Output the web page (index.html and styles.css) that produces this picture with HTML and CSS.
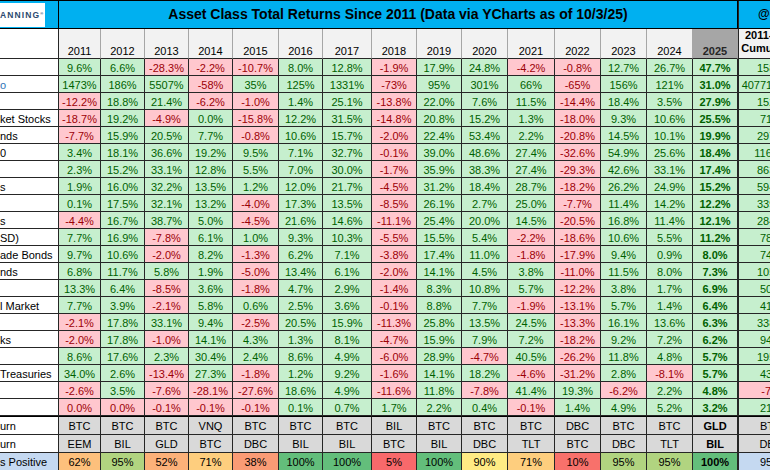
FILE: index.html
```html
<!DOCTYPE html>
<html lang="en">
<head>
<meta charset="utf-8">
<title>Asset Class Total Returns Since 2011</title>
<link rel="stylesheet" href="styles.css">
</head>
<body>
<div class="sheet">
  <div class="row top">
    <div class="logo-cell"><div class="logo">ANNING<span class="reg">®</span></div></div>
    <div class="title">Asset Class Total Returns Since 2011 (Data via YCharts as of 10/3/25)</div>
    <div class="cum handle">@charliebilello</div>
  </div>
  <div class="row head">
    <div class="lab"></div>
    <div>2011</div><div>2012</div><div>2013</div><div>2014</div><div>2015</div><div>2016</div><div>2017</div><div>2018</div><div>2019</div><div>2020</div><div>2021</div><div>2022</div><div>2023</div><div>2024</div><div class="cur">2025</div>
    <div class="cum">2011-2025<br>Cumulative</div>
  </div>
  <div class="row data">
    <div class="lab"></div>
    <div class="p">9.6%</div><div class="p">6.6%</div><div class="n">-28.3%</div><div class="n">-2.2%</div><div class="n">-10.7%</div><div class="p">8.0%</div><div class="p">12.8%</div><div class="n">-1.9%</div><div class="p">17.9%</div><div class="p">24.8%</div><div class="n">-4.2%</div><div class="n">-0.8%</div><div class="p">12.7%</div><div class="p">26.7%</div><div class="p">47.7%</div>
    <div class="p cum">158%</div>
  </div>
  <div class="row data">
    <div class="lab link">o</div>
    <div class="p">1473%</div><div class="p">186%</div><div class="p">5507%</div><div class="n">-58%</div><div class="p">35%</div><div class="p">125%</div><div class="p">1331%</div><div class="n">-73%</div><div class="p">95%</div><div class="p">301%</div><div class="p">66%</div><div class="n">-65%</div><div class="p">156%</div><div class="p">121%</div><div class="p">31.0%</div>
    <div class="p cum">40771552%</div>
  </div>
  <div class="row data">
    <div class="lab"></div>
    <div class="n">-12.2%</div><div class="p">18.8%</div><div class="p">21.4%</div><div class="n">-6.2%</div><div class="n">-1.0%</div><div class="p">1.4%</div><div class="p">25.1%</div><div class="n">-13.8%</div><div class="p">22.0%</div><div class="p">7.6%</div><div class="p">11.5%</div><div class="n">-14.4%</div><div class="p">18.4%</div><div class="p">3.5%</div><div class="p">27.9%</div>
    <div class="p cum">152%</div>
  </div>
  <div class="row data">
    <div class="lab">ket Stocks</div>
    <div class="n">-18.7%</div><div class="p">19.2%</div><div class="n">-4.9%</div><div class="p">0.0%</div><div class="n">-15.8%</div><div class="p">12.2%</div><div class="p">31.5%</div><div class="n">-14.8%</div><div class="p">20.8%</div><div class="p">15.2%</div><div class="p">1.3%</div><div class="n">-18.0%</div><div class="p">9.3%</div><div class="p">10.6%</div><div class="p">25.5%</div>
    <div class="p cum">71%</div>
  </div>
  <div class="row data">
    <div class="lab">nds</div>
    <div class="n">-7.7%</div><div class="p">15.9%</div><div class="p">20.5%</div><div class="p">7.7%</div><div class="n">-0.8%</div><div class="p">10.6%</div><div class="p">15.7%</div><div class="n">-2.0%</div><div class="p">22.4%</div><div class="p">53.4%</div><div class="p">2.2%</div><div class="n">-20.8%</div><div class="p">14.5%</div><div class="p">10.1%</div><div class="p">19.9%</div>
    <div class="p cum">297%</div>
  </div>
  <div class="row data">
    <div class="lab">0</div>
    <div class="p">3.4%</div><div class="p">18.1%</div><div class="p">36.6%</div><div class="p">19.2%</div><div class="p">9.5%</div><div class="p">7.1%</div><div class="p">32.7%</div><div class="n">-0.1%</div><div class="p">39.0%</div><div class="p">48.6%</div><div class="p">27.4%</div><div class="n">-32.6%</div><div class="p">54.9%</div><div class="p">25.6%</div><div class="p">18.4%</div>
    <div class="p cum">1163%</div>
  </div>
  <div class="row data">
    <div class="lab"></div>
    <div class="p">2.3%</div><div class="p">15.2%</div><div class="p">33.1%</div><div class="p">12.8%</div><div class="p">5.5%</div><div class="p">7.0%</div><div class="p">30.0%</div><div class="n">-1.7%</div><div class="p">35.9%</div><div class="p">38.3%</div><div class="p">27.4%</div><div class="n">-29.3%</div><div class="p">42.6%</div><div class="p">33.1%</div><div class="p">17.4%</div>
    <div class="p cum">863%</div>
  </div>
  <div class="row data">
    <div class="lab">s</div>
    <div class="p">1.9%</div><div class="p">16.0%</div><div class="p">32.2%</div><div class="p">13.5%</div><div class="p">1.2%</div><div class="p">12.0%</div><div class="p">21.7%</div><div class="n">-4.5%</div><div class="p">31.2%</div><div class="p">18.4%</div><div class="p">28.7%</div><div class="n">-18.2%</div><div class="p">26.2%</div><div class="p">24.9%</div><div class="p">15.2%</div>
    <div class="p cum">594%</div>
  </div>
  <div class="row data">
    <div class="lab"></div>
    <div class="p">0.1%</div><div class="p">17.5%</div><div class="p">32.1%</div><div class="p">13.2%</div><div class="n">-4.0%</div><div class="p">17.3%</div><div class="p">13.5%</div><div class="n">-8.5%</div><div class="p">26.1%</div><div class="p">2.7%</div><div class="p">25.0%</div><div class="n">-7.7%</div><div class="p">11.4%</div><div class="p">14.2%</div><div class="p">12.2%</div>
    <div class="p cum">339%</div>
  </div>
  <div class="row data">
    <div class="lab">s</div>
    <div class="n">-4.4%</div><div class="p">16.7%</div><div class="p">38.7%</div><div class="p">5.0%</div><div class="n">-4.5%</div><div class="p">21.6%</div><div class="p">14.6%</div><div class="n">-11.1%</div><div class="p">25.4%</div><div class="p">20.0%</div><div class="p">14.5%</div><div class="n">-20.5%</div><div class="p">16.8%</div><div class="p">11.4%</div><div class="p">12.1%</div>
    <div class="p cum">284%</div>
  </div>
  <div class="row data">
    <div class="lab">SD)</div>
    <div class="p">7.7%</div><div class="p">16.9%</div><div class="n">-7.8%</div><div class="p">6.1%</div><div class="p">1.0%</div><div class="p">9.3%</div><div class="p">10.3%</div><div class="n">-5.5%</div><div class="p">15.5%</div><div class="p">5.4%</div><div class="n">-2.2%</div><div class="n">-18.6%</div><div class="p">10.6%</div><div class="p">5.5%</div><div class="p">11.2%</div>
    <div class="p cum">78%</div>
  </div>
  <div class="row data">
    <div class="lab">ade Bonds</div>
    <div class="p">9.7%</div><div class="p">10.6%</div><div class="n">-2.0%</div><div class="p">8.2%</div><div class="n">-1.3%</div><div class="p">6.2%</div><div class="p">7.1%</div><div class="n">-3.8%</div><div class="p">17.4%</div><div class="p">11.0%</div><div class="n">-1.8%</div><div class="n">-17.9%</div><div class="p">9.4%</div><div class="p">0.9%</div><div class="p">8.0%</div>
    <div class="p cum">74%</div>
  </div>
  <div class="row data">
    <div class="lab">nds</div>
    <div class="p">6.8%</div><div class="p">11.7%</div><div class="p">5.8%</div><div class="p">1.9%</div><div class="n">-5.0%</div><div class="p">13.4%</div><div class="p">6.1%</div><div class="n">-2.0%</div><div class="p">14.1%</div><div class="p">4.5%</div><div class="p">3.8%</div><div class="n">-11.0%</div><div class="p">11.5%</div><div class="p">8.0%</div><div class="p">7.3%</div>
    <div class="p cum">105%</div>
  </div>
  <div class="row data">
    <div class="lab"></div>
    <div class="p">13.3%</div><div class="p">6.4%</div><div class="n">-8.5%</div><div class="p">3.6%</div><div class="n">-1.8%</div><div class="p">4.7%</div><div class="p">2.9%</div><div class="n">-1.4%</div><div class="p">8.3%</div><div class="p">10.8%</div><div class="p">5.7%</div><div class="n">-12.2%</div><div class="p">3.8%</div><div class="p">1.7%</div><div class="p">6.9%</div>
    <div class="p cum">50%</div>
  </div>
  <div class="row data">
    <div class="lab">l Market</div>
    <div class="p">7.7%</div><div class="p">3.9%</div><div class="n">-2.1%</div><div class="p">5.8%</div><div class="p">0.6%</div><div class="p">2.5%</div><div class="p">3.6%</div><div class="n">-0.1%</div><div class="p">8.8%</div><div class="p">7.7%</div><div class="n">-1.9%</div><div class="n">-13.1%</div><div class="p">5.7%</div><div class="p">1.4%</div><div class="p">6.4%</div>
    <div class="p cum">41%</div>
  </div>
  <div class="row data">
    <div class="lab"></div>
    <div class="n">-2.1%</div><div class="p">17.8%</div><div class="p">33.1%</div><div class="p">9.4%</div><div class="n">-2.5%</div><div class="p">20.5%</div><div class="p">15.9%</div><div class="n">-11.3%</div><div class="p">25.8%</div><div class="p">13.5%</div><div class="p">24.5%</div><div class="n">-13.3%</div><div class="p">16.1%</div><div class="p">13.6%</div><div class="p">6.3%</div>
    <div class="p cum">338%</div>
  </div>
  <div class="row data">
    <div class="lab">ks</div>
    <div class="n">-2.0%</div><div class="p">17.8%</div><div class="n">-1.0%</div><div class="p">14.1%</div><div class="p">4.3%</div><div class="p">1.3%</div><div class="p">8.1%</div><div class="n">-4.7%</div><div class="p">15.9%</div><div class="p">7.9%</div><div class="p">7.2%</div><div class="n">-18.2%</div><div class="p">9.2%</div><div class="p">7.2%</div><div class="p">6.2%</div>
    <div class="p cum">94%</div>
  </div>
  <div class="row data">
    <div class="lab"></div>
    <div class="p">8.6%</div><div class="p">17.6%</div><div class="p">2.3%</div><div class="p">30.4%</div><div class="p">2.4%</div><div class="p">8.6%</div><div class="p">4.9%</div><div class="n">-6.0%</div><div class="p">28.9%</div><div class="n">-4.7%</div><div class="p">40.5%</div><div class="n">-26.2%</div><div class="p">11.8%</div><div class="p">4.8%</div><div class="p">5.7%</div>
    <div class="p cum">195%</div>
  </div>
  <div class="row data">
    <div class="lab">Treasuries</div>
    <div class="p">34.0%</div><div class="p">2.6%</div><div class="n">-13.4%</div><div class="p">27.3%</div><div class="n">-1.8%</div><div class="p">1.2%</div><div class="p">9.2%</div><div class="n">-1.6%</div><div class="p">14.1%</div><div class="p">18.2%</div><div class="n">-4.6%</div><div class="n">-31.2%</div><div class="p">2.8%</div><div class="n">-8.1%</div><div class="p">5.7%</div>
    <div class="p cum">43%</div>
  </div>
  <div class="row data">
    <div class="lab"></div>
    <div class="n">-2.6%</div><div class="p">3.5%</div><div class="n">-7.6%</div><div class="n">-28.1%</div><div class="n">-27.6%</div><div class="p">18.6%</div><div class="p">4.9%</div><div class="n">-11.6%</div><div class="p">11.8%</div><div class="n">-7.8%</div><div class="p">41.4%</div><div class="p">19.3%</div><div class="n">-6.2%</div><div class="p">2.2%</div><div class="p">4.8%</div>
    <div class="n cum">-7%</div>
  </div>
  <div class="row data">
    <div class="lab"></div>
    <div class="n">0.0%</div><div class="n">0.0%</div><div class="n">-0.1%</div><div class="n">-0.1%</div><div class="n">-0.1%</div><div class="p">0.1%</div><div class="p">0.7%</div><div class="p">1.7%</div><div class="p">2.2%</div><div class="p">0.4%</div><div class="n">-0.1%</div><div class="p">1.4%</div><div class="p">4.9%</div><div class="p">5.2%</div><div class="p">3.2%</div>
    <div class="p cum">21%</div>
  </div>
  <div class="row sum first">
    <div class="lab">urn</div>
    <div>BTC</div><div>BTC</div><div>BTC</div><div>VNQ</div><div>BTC</div><div>BTC</div><div>BTC</div><div>BIL</div><div>BTC</div><div>BTC</div><div>BTC</div><div>DBC</div><div>BTC</div><div>BTC</div><div>GLD</div>
    <div class="cum">BTC</div>
  </div>
  <div class="row sum">
    <div class="lab">urn</div>
    <div>EEM</div><div>BIL</div><div>GLD</div><div>BTC</div><div>DBC</div><div>BIL</div><div>BIL</div><div>BTC</div><div>BIL</div><div>DBC</div><div>TLT</div><div>BTC</div><div>DBC</div><div>TLT</div><div>BIL</div>
    <div class="cum">DBC</div>
  </div>
  <div class="row sum pct">
    <div class="lab blue">s Positive</div>
    <div style="background:#FDC07C">62%</div><div style="background:#B1D480">95%</div><div style="background:#FCB179">52%</div><div style="background:#FECE7E">71%</div><div style="background:#FA9B75">38%</div><div style="background:#63BE7B">100%</div><div style="background:#63BE7B">100%</div><div style="background:#F8696B">5%</div><div style="background:#63BE7B">100%</div><div style="background:#FFEB84">90%</div><div style="background:#FECE7E">71%</div><div style="background:#F8716B">10%</div><div style="background:#B1D480">95%</div><div style="background:#B1D480">95%</div><div style="background:#63BE7B">100%</div>
    <div class="cum blue">95%</div>
  </div>
</div>
</body>
</html>
```

FILE: styles.css
```css
* {
  box-sizing: border-box;
}

html,
body {
  margin: 0;
  padding: 0;
  background: #ffffff;
  overflow: hidden;
}

body {
  width: 770px;
  height: 470px;
  font-family: "Liberation Sans", Arial, sans-serif;
  font-size: 11px;
  color: #000000;
}

.sheet {
  display: grid;
  grid-template-columns: 59px 42px 44px 44px 44px 46px 44px 49px 45px 45px 46px 47px 46px 46px 46px 45px 66px;
  grid-template-rows: 28px 30px repeat(21, 17px) 19px 18px 18px;
  width: 804px;
  border-top: 1px solid #000000;
}

.row {
  display: contents;
}

.row > div {
  display: flex;
  align-items: center;
  justify-content: center;
  white-space: nowrap;
  overflow: hidden;
  border-right: 1px solid #262626;
  border-bottom: 1px solid #262626;
}

.row > .cum {
  border-left: 1px solid #262626;
}

/* title bar */
.top > div {
  background: #00b0f0;
  border-bottom-color: #000000;
  border-right-color: #000000;
}

.logo-cell {
  justify-content: flex-start !important;
  align-items: flex-start !important;
  padding-top: 2px;
}

.logo {
  display: flex;
  align-items: center;
  width: 45px;
  height: 24px;
  background: #ffffff;
  color: #2b4a6f;
  font-size: 8.5px;
  font-weight: 700;
  letter-spacing: 1.1px;
}

.reg {
  font-size: 4px;
  align-self: flex-start;
  margin-top: 8px;
  letter-spacing: 0;
}

.title {
  grid-column: span 15;
  font-size: 14px;
  font-weight: 700;
  padding-bottom: 2px;
}

.handle {
  justify-content: flex-start !important;
  padding-left: 19px;
  font-size: 12px;
  font-weight: 700;
  padding-bottom: 2px;
}

/* header */
.head > div {
  background: #f2f2f2;
  align-items: flex-end;
  line-height: 13px;
  border-right-color: #a6a6a6;
  border-bottom-color: #262626;
}

.head > .lab {
  background: #ffffff;
  border-right-color: #262626;
}

.head > .cur {
  background: #a6a6a6;
  color: #262626;
  font-weight: 700;
}

.head > .cum {
  flex-direction: column;
  justify-content: flex-start;
  align-items: center;
  font-weight: 700;
  line-height: 12.5px;
  text-align: center;
  border-right-color: #262626;
  border-left-color: #262626;
}

/* data */
.data > div,
.sum > div {
  align-items: flex-start;
  padding-top: 2px;
  line-height: 14px;
}

.row > .lab {
  justify-content: flex-start;
  background: #ffffff;
}

.link {
  color: #2e75b6;
}

.p {
  background: #c6efce;
  color: #006100;
}

.n {
  background: #ffc7ce;
  color: #9c0006;
}

.data > div:nth-child(16),
.sum > div:nth-child(16) {
  font-weight: 700;
}

/* summary */
.sum > div {
  background: #d9d9d9;
}

.sum.first > div {
  border-top: 1px solid #000000;
}

.row > .blue {
  background: #c5d9f1;
}
```
